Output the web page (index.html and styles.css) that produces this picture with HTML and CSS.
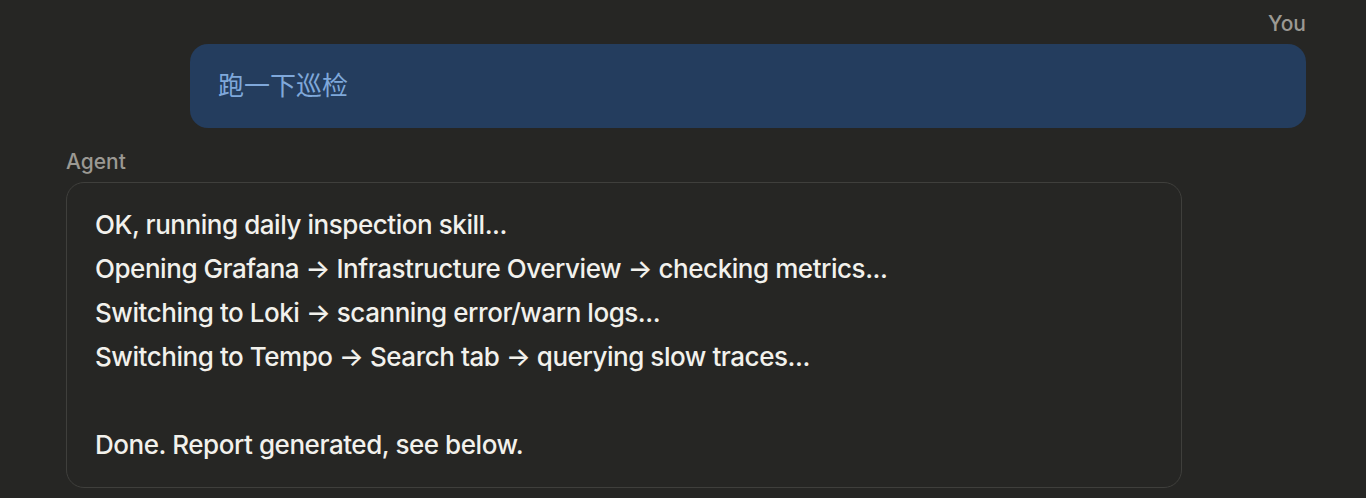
FILE: index.html
```html
<!DOCTYPE html>
<html lang="zh">
<head>
  <meta charset="UTF-8">
  <title>Chat</title>
  <meta name="viewport" content="width=device-width, initial-scale=1.0">
  <link rel="stylesheet" href="styles.css">
</head>
<body>

  <div class="chat">
    <!-- User message -->
    <div class="msg msg-user">
      <div class="label">You</div>
      <div class="bubble">跑一下巡检</div>
    </div>

    <!-- Agent reply -->
    <div class="msg msg-agent">
      <div class="label">Agent</div>
      <div class="reply">
        <p>OK, running daily inspection skill...</p>
        <p>Opening Grafana → Infrastructure Overview → checking metrics...</p>
        <p>Switching to Loki → scanning error/warn logs...</p>
        <p>Switching to Tempo → Search tab → querying slow traces...</p>
        <p class="blank"></p>
        <p>Done. Report generated, see below.</p>
      </div>
    </div>
  </div>

</body>
</html>
```

FILE: styles.css
```css
body {
  margin: 0;
  padding: 0;
  background: #262624;
  font-family: Inter, "Noto Sans CJK SC", sans-serif;
  overflow: hidden;
}

.chat {
  padding: 12px 60px 0 66px;
  display: flex;
  flex-direction: column;
  gap: 22px;
}

.msg {
  display: flex;
  flex-direction: column;
  gap: 8px;
  width: 90%;
}

.msg-user {
  align-self: flex-end;
  align-items: flex-end;
}

.msg-agent {
  align-self: flex-start;
}

.label {
  font-size: 21px;
  font-weight: 500;
  line-height: 24px;
  color: #9b9993;
}

.bubble {
  box-sizing: border-box;
  width: 100%;
  padding: 24px 28px;
  background: #243d5e;
  color: #7fa8da;
  border-radius: 18px;
  font-size: 26px;
  line-height: 36px;
}

.reply {
  border: 1px solid #3f3f3c;
  border-radius: 18px;
  padding: 20px 28px;
  color: #f2f1ec;
  font-size: 26px;
  font-weight: 500;
  letter-spacing: -0.45px;
  line-height: 44px;
}

.reply p {
  margin: 0;
}

.reply .blank {
  height: 44px;
}
```
